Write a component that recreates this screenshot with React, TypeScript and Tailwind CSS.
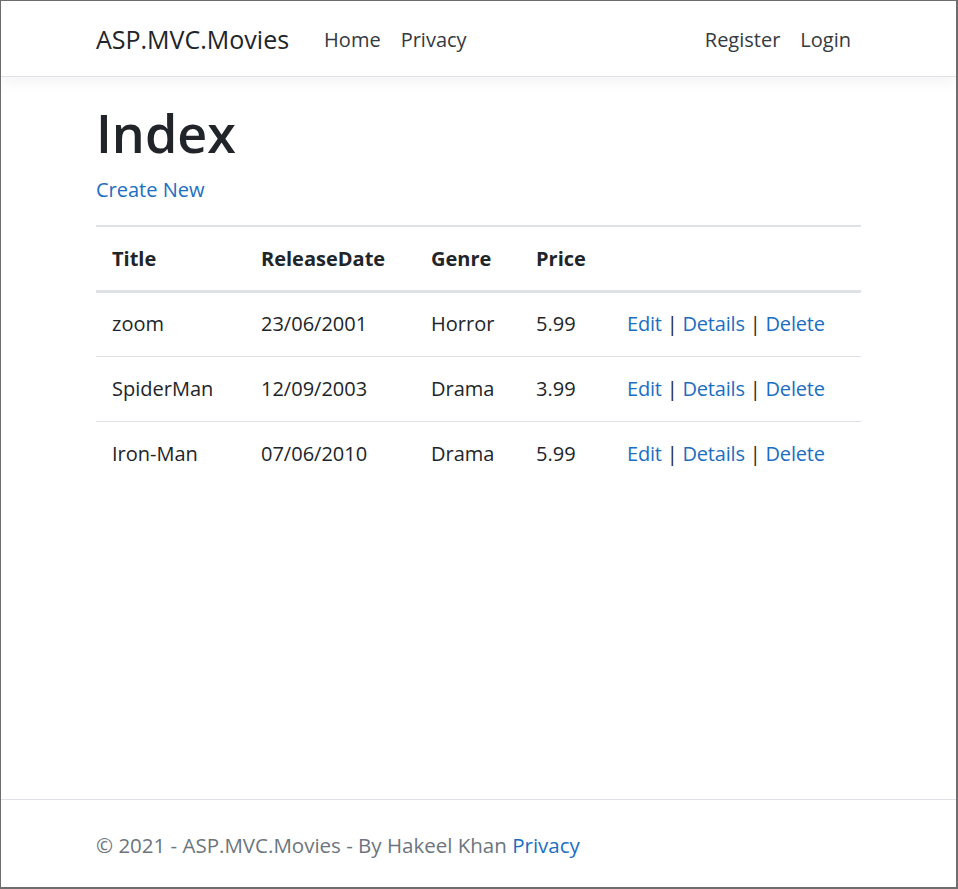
import React from "react";

const movies = [
  { title: "zoom", date: "23/06/2001", genre: "Horror", price: "5.99" },
  { title: "SpiderMan", date: "12/09/2003", genre: "Drama", price: "3.99" },
  { title: "Iron-Man", date: "07/06/2010", genre: "Drama", price: "5.99" },
];

function App() {
  return (
    <div
      className="h-[889px] w-[958px] flex flex-col bg-white border-[#6e6e6e] border-t border-l border-r-2 border-b-2 text-[#212529]"
      style={{ fontFamily: '"Open Sans", "Noto Sans", sans-serif' }}
    >
      <header className="h-[76px] border-b border-[#dee2e6] shadow-[0_5px_15px_rgba(0,0,0,0.05)] flex-shrink-0">
        <div className="w-[765px] mx-auto h-full flex items-center pt-[3px]">
          <a className="text-[25px] text-[#212529] mr-[25px]">ASP.MVC.Movies</a>
          <nav className="flex text-[20px] text-[#343a40]">
            <a className="px-[10px]">Home</a>
            <a className="px-[10px]">Privacy</a>
          </nav>
          <nav className="flex text-[20px] text-[#343a40] ml-auto">
            <a className="px-[10px]">Register</a>
            <a className="pl-[10px] pr-[10px]">Login</a>
          </nav>
        </div>
      </header>

      <main className="flex-1">
        <div className="w-[765px] mx-auto pt-[25px]">
          <h1 className="text-[52px] font-semibold leading-[1.2] mb-[11px]">Index</h1>
          <p className="mb-[20px] leading-[1.5]">
            <a className="text-[20px] text-[#1b6ec2]">Create New</a>
          </p>
          <table className="w-full text-[20px] border-collapse">
            <thead>
              <tr className="border-t-2 border-[#dee2e6] border-b-[3px]">
                <th className="w-[149px] text-left font-bold px-4 h-[65px]">Title</th>
                <th className="w-[170px] text-left font-bold px-4">ReleaseDate</th>
                <th className="w-[105px] text-left font-bold px-4">Genre</th>
                <th className="w-[91px] text-left font-bold px-4">Price</th>
                <th className="px-4"></th>
              </tr>
            </thead>
            <tbody>
              {movies.map((m, i) => (
                <tr key={i} className={i < movies.length - 1 ? "border-b border-[#dee2e6]" : ""}>
                  <td className="px-4 h-[65px]">{m.title}</td>
                  <td className="px-4">{m.date}</td>
                  <td className="px-4">{m.genre}</td>
                  <td className="px-4">{m.price}</td>
                  <td className="px-4 tracking-[-0.2px]">
                    <a className="text-[#1b6ec2]">Edit</a> |{" "}
                    <a className="text-[#1b6ec2]">Details</a> |{" "}
                    <a className="text-[#1b6ec2]">Delete</a>
                  </td>
                </tr>
              ))}
            </tbody>
          </table>
        </div>
      </main>

      <footer className="h-[88px] border-t border-[#dee2e6] flex-shrink-0">
        <div className="w-[765px] mx-auto h-full flex items-center pt-[4px] text-[20.5px] text-[#6c757d]">
          <span>
            © 2021 - ASP.MVC.Movies - By Hakeel Khan{" "}
            <a className="text-[#1b6ec2]">Privacy</a>
          </span>
        </div>
      </footer>
    </div>
  );
}

export default App;
